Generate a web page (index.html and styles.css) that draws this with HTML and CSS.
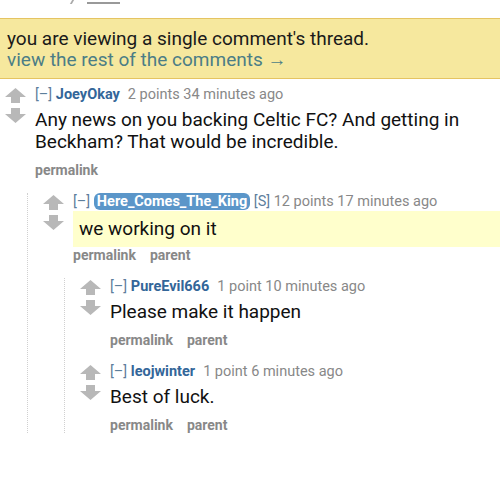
FILE: index.html
```html
<!DOCTYPE html>
<html lang="en">
<head>
    <meta charset="UTF-8">
    <meta name="viewport" content="width=device-width, initial-scale=1.0">
    <title>single comment thread</title>
    <link rel="stylesheet" href="styles.css">
</head>
<body>

<div class="topbar">
    <span class="topbar-slash"></span>
    <span class="topbar-link"></span>
</div>

<div class="infobar">
    <div>you are viewing a single comment's thread.</div>
    <a href="#" class="infobar-link">view the rest of the comments &rarr;</a>
</div>

<div class="comments">
    <div class="comment">
        <div class="arrows">
            <svg class="arrow" viewBox="0 0 21 15"><polygon points="10.5,0 21,9 15,9 15,15 6,15 6,9 0,9"/></svg>
            <svg class="arrow" viewBox="0 0 21 15"><polygon points="10.5,15 21,6 15,6 15,0 6,0 6,6 0,6"/></svg>
        </div>
        <div class="entry">
            <div class="tagline"><span class="expand">[&ndash;]</span> <span class="author">JoeyOkay</span><span class="score">2 points 34 minutes ago</span></div>
            <div class="body">Any news on you backing Celtic FC? And getting in Beckham? That would be incredible.</div>
            <div class="buttons"><span>permalink</span></div>
        </div>
    </div>

    <div class="child">
        <div class="comment">
            <div class="arrows">
                <svg class="arrow" viewBox="0 0 21 15"><polygon points="10.5,0 21,9 15,9 15,15 6,15 6,9 0,9"/></svg>
                <svg class="arrow" viewBox="0 0 21 15"><polygon points="10.5,15 21,6 15,6 15,0 6,0 6,6 0,6"/></svg>
            </div>
            <div class="entry">
                <div class="tagline"><span class="expand">[&ndash;]</span> <span class="author submitter">Here_Comes_The_King</span> <span class="expand">[S]</span> 12 points 17 minutes ago</div>
                <div class="body highlighted">we working on it</div>
                <div class="buttons"><span>permalink</span><span>parent</span></div>
            </div>
        </div>

        <div class="child grandchild">
            <div class="comment">
                <div class="arrows">
                    <svg class="arrow" viewBox="0 0 21 15"><polygon points="10.5,0 21,9 15,9 15,15 6,15 6,9 0,9"/></svg>
                    <svg class="arrow" viewBox="0 0 21 15"><polygon points="10.5,15 21,6 15,6 15,0 6,0 6,6 0,6"/></svg>
                </div>
                <div class="entry">
                    <div class="tagline"><span class="expand">[&ndash;]</span> <span class="author">PureEvil666</span><span class="score">1 point 10 minutes ago</span></div>
                    <div class="body">Please make it happen</div>
                    <div class="buttons"><span>permalink</span><span>parent</span></div>
                </div>
            </div>

            <div class="comment">
                <div class="arrows">
                    <svg class="arrow" viewBox="0 0 21 15"><polygon points="10.5,0 21,9 15,9 15,15 6,15 6,9 0,9"/></svg>
                    <svg class="arrow" viewBox="0 0 21 15"><polygon points="10.5,15 21,6 15,6 15,0 6,0 6,6 0,6"/></svg>
                </div>
                <div class="entry">
                    <div class="tagline"><span class="expand">[&ndash;]</span> <span class="author">leojwinter</span><span class="score">1 point 6 minutes ago</span></div>
                    <div class="body">Best of luck.</div>
                    <div class="buttons"><span>permalink</span><span>parent</span></div>
                </div>
            </div>
        </div>
    </div>
</div>

</body>
</html>
```

FILE: styles.css
```css
body {
    margin: 0;
    font-family: Roboto, "Liberation Sans", sans-serif;
    color: #222;
    background: #fff;
}
.topbar {
    height: 18px;
    display: flex;
    align-items: flex-start;
}
.topbar-slash {
    width: 2px;
    height: 4px;
    margin-left: 71px;
    background-color: #aaa;
    transform: skewX(-30deg);
}
.topbar-link {
    width: 33px;
    height: 0;
    margin-top: 2px;
    margin-left: 14px;
    border-bottom: 2px solid #999;
}
.infobar {
    background-color: #f6e89e;
    border-top: 1px solid #e5c462;
    border-bottom: 1px solid #e5c462;
    padding: 9px 7px 8px;
    font-size: 19px;
    line-height: 21px;
    color: #1a1a1a;
}
.infobar-link {
    color: #4b7d86;
    text-decoration: none;
}
.comments {
    padding-top: 7px;
}
.comment {
    display: flex;
    padding-left: 5px;
    margin-bottom: 15px;
}
.arrows {
    display: flex;
    flex-direction: column;
    gap: 5px;
    width: 21px;
    margin-top: 2px;
    margin-right: 9px;
    flex-shrink: 0;
}
.arrow {
    width: 21px;
    height: 15px;
    fill: #b8b8b8;
}
.entry {
    flex: 1;
    min-width: 0;
}
.tagline {
    font-size: 14.5px;
    line-height: 18px;
    color: #888;
    white-space: nowrap;
}
.expand {
    color: #5d7e9c;
}
.author {
    color: #336699;
    font-weight: bold;
}
.submitter {
    background-color: #5b96c9;
    color: #fff;
    border-radius: 6px;
    padding: 0 3px;
}
.score {
    margin-left: 8px;
}
.body {
    font-size: 19px;
    line-height: 22px;
    color: #111;
    margin-top: 5px;
}
.highlighted {
    margin-top: 0;
    background-color: #ffffcc;
    padding: 7px 7px 7px 6px;
}
.buttons {
    font-size: 14px;
    line-height: 16px;
    font-weight: bold;
    color: #888;
    margin-top: 9px;
}
.highlighted + .buttons {
    margin-top: 0;
}
.buttons span {
    margin-right: 14px;
}
.child {
    margin-left: 27px;
    border-left: 1px dotted #d0d0d0;
    padding-left: 10px;
}
.grandchild {
    margin-left: 26px;
}
```
